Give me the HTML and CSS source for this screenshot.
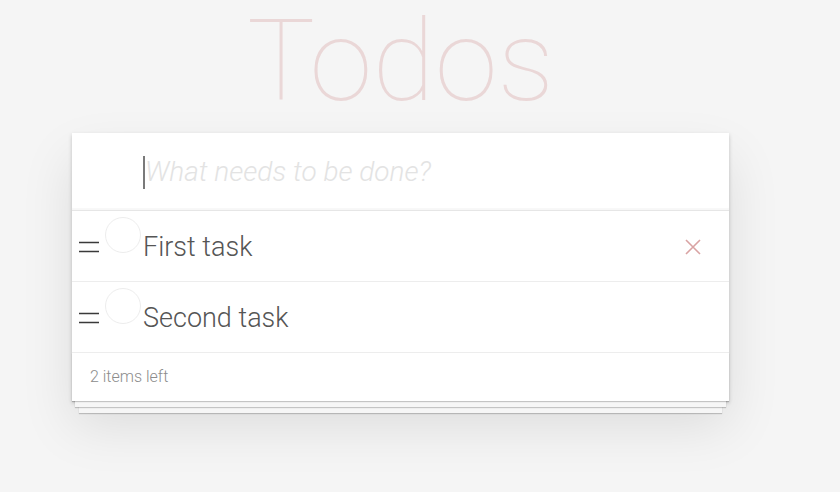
FILE: index.html
```html
<!DOCTYPE html>
<html lang="en">
<head>
  <meta charset="UTF-8" />
  <meta name="viewport" content="width=device-width, initial-scale=1" />
  <title>Todos</title>
  <link rel="stylesheet" href="styles.css">
</head>
<body>
  <div class="app">
    <h1 class="title">Todos</h1>

    <section class="card">
      <div class="new-todo">
        <span class="caret"></span>
        <input class="new-input" type="text" placeholder="What needs to be done?" />
      </div>

      <ul class="todo-list">
        <li class="todo">
          <span class="handle">
            <svg width="20" height="12" viewBox="0 0 20 12"><path d="M0 1.5h20M0 10.5h20" stroke="#3a3a3a" stroke-width="1.5" fill="none"/></svg>
          </span>
          <span class="toggle"></span>
          <label class="todo-text">First task</label>
          <button class="destroy" title="Delete">
            <svg width="16" height="16" viewBox="0 0 16 16"><path d="M1 1L15 15M15 1L1 15" stroke="#d9a3a3" stroke-width="1.6" fill="none"/></svg>
          </button>
        </li>
        <li class="todo">
          <span class="handle">
            <svg width="20" height="12" viewBox="0 0 20 12"><path d="M0 1.5h20M0 10.5h20" stroke="#3a3a3a" stroke-width="1.5" fill="none"/></svg>
          </span>
          <span class="toggle"></span>
          <label class="todo-text">Second task</label>
        </li>
      </ul>

      <footer class="footer">
        <span class="count">2 items left</span>
      </footer>
    </section>
  </div>
</body>
</html>
```

FILE: styles.css
```css
html, body {
  height: 100%;
}
body {
  margin: 0;
  background: #f5f5f5;
  font-family: "Helvetica Neue", Roboto, "Liberation Sans", Arial, sans-serif;
  font-weight: 300;
  color: #4d4d4d;
}
.app {
  width: 657px;
  margin-left: 72px;
}
.title {
  margin: 0;
  height: 133px;
  font-size: 114px;
  font-weight: 100;
  line-height: 122px;
  text-align: center;
  color: rgba(175, 47, 47, 0.15);
}
.card {
  background: #fff;
  box-shadow: 0 2px 4px rgba(0,0,0,0.2), 0 25px 50px rgba(0,0,0,0.1);
}
.new-todo {
  display: flex;
  align-items: center;
  height: 77px;
  padding-left: 71px;
  border-bottom: 1px solid #e6e6e6;
  box-shadow: inset 0 -2px 1px rgba(0,0,0,0.03);
}
.caret {
  width: 2px;
  height: 33px;
  background: #7a7a7a;
  margin-top: 2px;
}
.new-input {
  flex: 1;
  border: none;
  outline: none;
  padding: 0;
  font: inherit;
  font-size: 28px;
  background: transparent;
  color: #4d4d4d;
}
.new-input::placeholder {
  font-style: italic;
  font-weight: 300;
  color: #e3e3e3;
}
.todo-list {
  list-style: none;
  margin: 0;
  padding: 0;
}
.todo {
  display: flex;
  align-items: center;
  height: 70px;
  border-bottom: 1px solid #ededed;
  padding-left: 7px;
}
.handle {
  display: flex;
  width: 20px;
  margin-top: 2px;
}
.toggle {
  align-self: flex-start;
  width: 34px;
  height: 34px;
  margin: 6px 0 0 6px;
  border: 1px solid #ededed;
  border-radius: 50%;
}
.todo-text {
  flex: 1;
  margin: 2px 0 0 2px;
  font-size: 27px;
  color: #555;
}
.destroy {
  border: none;
  background: none;
  padding: 0;
  margin: 2px 28px 0 0;
  display: flex;
}
.footer {
  height: 48px;
  display: flex;
  align-items: center;
  padding-left: 18px;
  font-size: 16px;
  color: #8c8c8c;
  box-shadow: 0 1px 1px rgba(0,0,0,0.2),
              0 9px 0 -3px #f6f6f6,
              0 10px 1px -3px rgba(0,0,0,0.2),
              0 19px 0 -7px #f6f6f6,
              0 20px 1px -7px rgba(0,0,0,0.2);
}
.count {
  margin-top: -1px;
}
```
